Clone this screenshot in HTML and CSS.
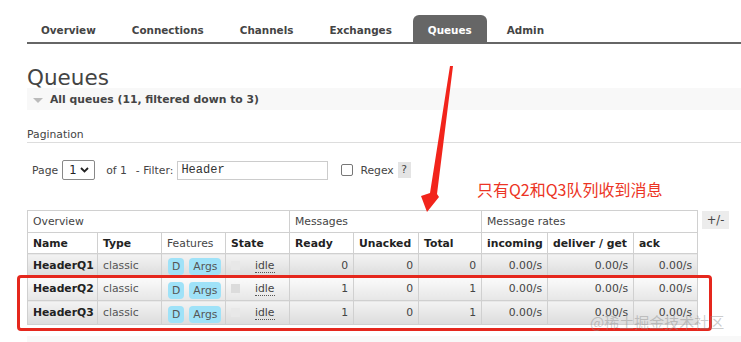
FILE: index.html
```html
<!DOCTYPE html>
<html lang="en">

<head>
    <meta charset="UTF-8">
    <meta name="viewport" content="width=device-width, initial-scale=1.0">
    <title>RabbitMQ Management - Queues</title>
    <link rel="stylesheet" href="styles.css">
</head>

<body>

    <nav class="tabs">
        <ul>
            <li><a href="#">Overview</a></li>
            <li><a href="#">Connections</a></li>
            <li><a href="#">Channels</a></li>
            <li><a href="#">Exchanges</a></li>
            <li class="active"><a href="#">Queues</a></li>
            <li><a href="#">Admin</a></li>
        </ul>
    </nav>

    <main class="content">
        <h1>Queues</h1>

        <div class="section-head">
            <span class="toggle"></span>
            All queues (11, filtered down to 3)
        </div>

        <div class="section-body">
            <h3 class="subhead">Pagination</h3>

            <div class="filter-row">
                <label for="page">Page</label>
                <span class="select-box">
                    <select id="page">
                        <option>1</option>
                    </select>
                    <svg class="chevron" width="9" height="6" viewBox="0 0 9 6">
                        <path d="M1 1 L4.5 4.5 L8 1" fill="none" stroke="#222" stroke-width="1.8" />
                    </svg>
                </span>
                <span class="of">of 1</span>
                <label for="filter">- Filter:</label>
                <input type="text" id="filter" class="filter-input" value="Header">
                <span class="checkbox"></span>
                <label class="regex">Regex</label>
                <span class="help">?</span>
            </div>

            <div class="table-wrap">
                <table class="list">
                    <colgroup>
                        <col style="width: 70px">
                        <col style="width: 64px">
                        <col style="width: 64px">
                        <col style="width: 64px">
                        <col style="width: 64px">
                        <col style="width: 65px">
                        <col style="width: 63px">
                        <col style="width: 66px">
                        <col style="width: 86px">
                        <col style="width: 64px">
                    </colgroup>
                    <thead>
                        <tr class="group-row">
                            <th colspan="4">Overview</th>
                            <th colspan="3">Messages</th>
                            <th colspan="3">Message rates</th>
                        </tr>
                        <tr class="col-row">
                            <th>Name</th>
                            <th>Type</th>
                            <th class="normal">Features</th>
                            <th>State</th>
                            <th>Ready</th>
                            <th>Unacked</th>
                            <th>Total</th>
                            <th>incoming</th>
                            <th>deliver / get</th>
                            <th>ack</th>
                        </tr>
                    </thead>
                    <tbody>
                        <tr class="alt1">
                            <td class="name">HeaderQ1</td>
                            <td>classic</td>
                            <td><span class="badge">D</span><span class="badge">Args</span></td>
                            <td><span class="state-dot"></span><span class="idle">idle</span></td>
                            <td class="num">0</td>
                            <td class="num">0</td>
                            <td class="num">0</td>
                            <td class="num">0.00/s</td>
                            <td class="num">0.00/s</td>
                            <td class="num">0.00/s</td>
                        </tr>
                        <tr class="alt2">
                            <td class="name">HeaderQ2</td>
                            <td>classic</td>
                            <td><span class="badge">D</span><span class="badge">Args</span></td>
                            <td><span class="state-dot"></span><span class="idle">idle</span></td>
                            <td class="num">1</td>
                            <td class="num">0</td>
                            <td class="num">1</td>
                            <td class="num">0.00/s</td>
                            <td class="num">0.00/s</td>
                            <td class="num">0.00/s</td>
                        </tr>
                        <tr class="alt1">
                            <td class="name">HeaderQ3</td>
                            <td>classic</td>
                            <td><span class="badge">D</span><span class="badge">Args</span></td>
                            <td><span class="state-dot"></span><span class="idle">idle</span></td>
                            <td class="num">1</td>
                            <td class="num">0</td>
                            <td class="num">1</td>
                            <td class="num">0.00/s</td>
                            <td class="num">0.00/s</td>
                            <td class="num">0.00/s</td>
                        </tr>
                    </tbody>
                </table>
                <span class="col-toggle">+/-</span>
            </div>
        </div>

        <div class="section-head closed"></div>
    </main>

    <!-- annotations drawn over the screenshot -->
    <svg class="arrow" width="50" height="155" viewBox="415 62 50 155">
        <polygon points="450,66 453,66 437,194 439,197 427,212 421,196 430,193" fill="#f2241b" />
    </svg>
    <p class="note">只有Q2和Q3队列收到消息</p>
    <div class="highlight"></div>
    <p class="watermark">@稀土掘金技术社区</p>

</body>

</html>
```

FILE: styles.css
```css
* {
    box-sizing: border-box;
    padding: 0;
    margin: 0;
}

body {
    font-family: Verdana, "DejaVu Sans", sans-serif;
    font-size: 10.8px;
    color: #444;
    background: #fff;
    width: 741px;
    height: 342px;
    overflow: hidden;
    position: relative;
}

a {
    color: inherit;
    text-decoration: none;
}

/* tabs */
.tabs {
    margin: 15px 0 0 27px;
    border-bottom: 2px solid #666;
}

.tabs ul {
    display: flex;
    list-style: none;
    margin-left: -4px;
}

.tabs li a {
    display: block;
    height: 27px;
    padding: 3px 18px 0;
    line-height: 24px;
    font-size: 10.4px;
    font-weight: bold;
    color: #444;
}

.tabs li.active a {
    background: #666;
    color: #fff;
    border-radius: 6px 6px 0 0;
    padding: 3px 15px 0;
    margin: 0 2px 0 3px;
}

/* page */
.content {
    padding-left: 27px;
}

h1 {
    font-size: 21.5px;
    font-weight: normal;
    line-height: 21px;
    color: #444;
    margin-top: 23px;
}

.section-head {
    height: 22px;
    background: #f8f8f8;
    display: flex;
    align-items: center;
    font-weight: bold;
    color: #444;
    padding-left: 6px;
}

.section-head.closed {
    height: 7px;
    margin-top: 11px;
}

.toggle {
    width: 0;
    height: 0;
    border-left: 5px solid transparent;
    border-right: 5px solid transparent;
    border-top: 5px solid #bbb;
    margin-right: 7px;
    margin-top: 2px;
}

.subhead {
    font-size: 10.8px;
    font-weight: normal;
    line-height: 14px;
    margin-top: 18px;
    border-bottom: 1px solid #ddd;
    color: #444;
}

.filter-row {
    display: flex;
    align-items: center;
    height: 20px;
    margin-top: 17px;
    padding-left: 5px;
}

.select-box {
    position: relative;
    display: inline-block;
    width: 33px;
    height: 20px;
    margin-left: 4px;
    border: 1px solid #888;
    border-radius: 2px;
}

.select-box select {
    appearance: none;
    border: 0;
    background: transparent;
    font: inherit;
    font-size: 11.5px;
    color: #222;
    width: 100%;
    height: 100%;
    padding-left: 6px;
}

.chevron {
    position: absolute;
    right: 5px;
    top: 6px;
}

.of {
    margin: 0 9px 0 11px;
}

.filter-input {
    width: 151px;
    height: 19px;
    margin-left: 4px;
    border: 1px solid #ccc;
    font-family: "Liberation Mono", monospace;
    font-size: 12px;
    color: #333;
    padding-left: 3px;
}

.checkbox {
    width: 12px;
    height: 12px;
    border: 1px solid #777;
    border-radius: 2px;
    margin-left: 13px;
}

.regex {
    margin-left: 7px;
}

.help {
    width: 13px;
    height: 16px;
    line-height: 16px;
    text-align: center;
    background: #e4e4e4;
    margin-left: 4px;
}

/* table */
.table-wrap {
    display: flex;
    align-items: flex-start;
    gap: 4px;
    margin-top: 30px;
}

.list {
    border-collapse: collapse;
    table-layout: fixed;
    width: 670px;
}

.list th,
.list td {
    border: 1px solid #d0d0d0;
    padding: 0 5px;
    white-space: nowrap;
    overflow: hidden;
}

.list th {
    text-align: left;
    background: #fff;
    color: #222;
}

.group-row th {
    font-weight: normal;
    height: 22px;
    color: #444;
}

.col-row th {
    height: 21px;
}

.col-row th.normal {
    font-weight: normal;
    color: #444;
}

.list td {
    height: 24px;
    color: #555;
}

.list tbody tr:first-child td {
    height: 23px;
}

.alt1 td {
    background: linear-gradient(#f3f3f3, #dcdcdc);
}

.alt2 td {
    background: linear-gradient(#fbfbfb, #e6e6e6);
}

.list td.name {
    font-weight: bold;
    color: #222;
}

.list td.num {
    text-align: right;
    color: #444;
}

.badge {
    display: inline-block;
    background: #9fe2f8;
    color: #555;
    border-radius: 4px;
    padding: 0 4px;
    line-height: 17px;
    margin-top: 3px;
    margin-right: 5px;
}

.list td:nth-child(3) {
    padding-left: 6px;
}

.state-dot {
    display: inline-block;
    width: 9px;
    height: 9px;
    background: #dcdcdc;
    margin-right: 15px;
    vertical-align: -1px;
}

.alt1 .state-dot {
    background: #e8e8e8;
}

.idle {
    border-bottom: 1px dotted #555;
    color: #444;
}

.col-toggle {
    display: inline-block;
    width: 27px;
    height: 18px;
    line-height: 18px;
    margin-top: 1px;
    text-align: center;
    background: #ececec;
    color: #444;
    font-size: 11.5px;
}

/* annotations */
.arrow {
    position: absolute;
    left: 415px;
    top: 62px;
}

.note {
    position: absolute;
    left: 477px;
    top: 178px;
    font-family: "Noto Sans CJK SC", sans-serif;
    font-size: 16px;
    line-height: 22px;
    color: #ec3424;
}

.highlight {
    position: absolute;
    left: 17px;
    top: 275px;
    width: 695px;
    height: 56px;
    border: 3px solid #e5271d;
    border-radius: 4px;
}

.watermark {
    position: absolute;
    left: 590px;
    top: 311px;
    font-family: "Noto Sans CJK SC", sans-serif;
    font-size: 15px;
    line-height: 22px;
    color: rgba(140, 140, 140, 0.45);
}
```
